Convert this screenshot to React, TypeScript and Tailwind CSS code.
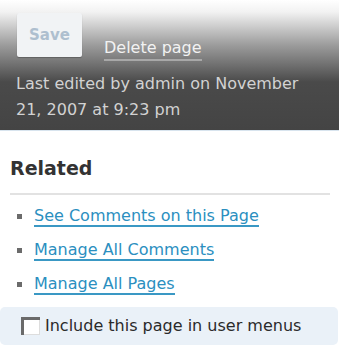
export default function App() {
  const links = ["See Comments on this Page", "Manage All Comments", "Manage All Pages"];

  return (
    <div className="w-[340px] h-[357px] bg-white font-['DejaVu_Sans',sans-serif] overflow-hidden">
      {/* dark action panel */}
      <div className="h-[131px] w-[339px] border-b border-[#d8e4ee] bg-[linear-gradient(to_bottom,#ffffff_0px,#f2f2f2_12px,#9c9c9c_45px,#4a4a4a_82px,#444444_100%)] px-4 pt-[13px]">
        <div className="flex items-end">
          <button className="ml-[1px] h-[44px] w-[65px] rounded-[2px] bg-[#f1f3f5] text-[15px] font-bold text-[#aebfcf] shadow-[0_1px_1px_rgba(0,0,0,0.25)]">
            Save
          </button>
          <a className="ml-[22px] mb-[-4px] border-b-2 border-[#a8a8a8] pb-[2px] text-[16px] leading-[19px] text-[#f2f2f2]">
            Delete page
          </a>
        </div>
        <p className="mt-[14px] text-[16px] leading-[26px] text-[#d2d2d2]">
          Last edited by admin on November 21, 2007 at 9:23 pm
        </p>
      </div>

      <div className="px-[10px]">
        <h2 className="mt-[25px] text-[19px] font-bold leading-[24px] text-[#333]">Related</h2>
        <div className="mt-[13px] h-[2px] w-[320px] bg-[#e2e2e2]" />
        <ul className="mt-[11px] flex flex-col gap-[13px]">
          {links.map((l) => (
            <li key={l} className="flex items-center">
              <span className="ml-[7px] h-[5px] w-[5px] bg-[#6b6b6b]" />
              <a className="ml-[12px] border-b-2 border-[#3a98c4] text-[16px] leading-[19px] text-[#2b8fbf]">
                {l}
              </a>
            </li>
          ))}
        </ul>
      </div>

      <div className="mt-[12px] mr-[2px] flex h-[38px] items-center rounded-[5px] bg-[#eaf1f8] pl-[21px]">
        <span className="h-[18px] w-[19px] border-l-[3px] border-t-[3px] border-[#6a6a6a] bg-white shadow-[inset_-1px_-1px_0_#ddd]" />
        <span className="ml-[5px] text-[16px] text-[#2a2a2a]">Include this page in user menus</span>
      </div>
    </div>
  );
}
